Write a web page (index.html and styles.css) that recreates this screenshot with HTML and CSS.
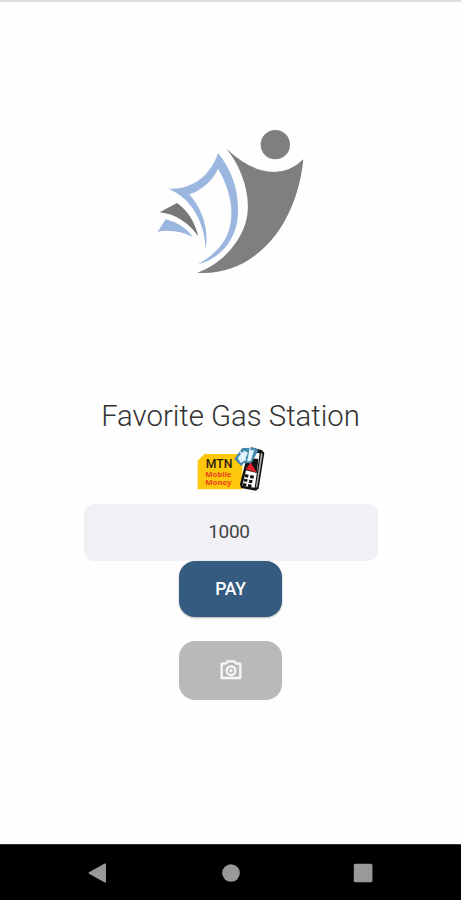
FILE: index.html
```html
<!DOCTYPE html>
<html lang="en">
<head>
<meta charset="utf-8">
<title>Favorite Gas Station</title>
<link rel="stylesheet" href="styles.css">
</head>
<body>
<main class="screen">
  <svg class="logo" viewBox="0 0 510 495" aria-hidden="true">
    <g fill="#7f7f7f">
      <circle cx="391" cy="74" r="44"/>
      <path d="M243 85Q297 137 350 151Q422 170 475 118C466 218 424 326 350 390C294 440 230 463 156 458C220 438 280 378 302 308C323 234 292 144 243 85Z"/>
      <path fill="#777" d="M44 277L96 249Q143 282 160 349Q112 284 44 277Z"/>
    </g>
    <g fill="#9bb7e0">
      <path fill-rule="evenodd" d="M219 99C260 149 282 211 279 282C275 361 226 415 159 433C212 402 245 366 255 318C268 260 249 196 219 146C203 183 169 211 133 223C169 263 193 325 182 386C178 305 139 234 70 206C139 209 195 171 219 99Z"/>
      <path d="M62 298Q111 309 144 351Q91 325 38 335Z"/>
    </g>
  </svg>
  <h1 class="title">Favorite Gas Station</h1>
  <svg class="momo" viewBox="0 0 255 180" role="img" aria-label="MTN Mobile Money">
    <path fill="#fdc70c" d="M43 42H157V148H23V62Z"/>
    <text class="mtn" x="47" y="84" textLength="80" lengthAdjust="spacingAndGlyphs">MTN</text>
    <text class="mobile" x="46" y="111" textLength="78" lengthAdjust="spacingAndGlyphs">Mobile</text>
    <text class="mobile" x="46" y="136" textLength="78" lengthAdjust="spacingAndGlyphs">Money</text>
    <path fill="#111" d="M176 29L184 22 216 31 223 39 206 145 198 152 153 144 150 133Z"/>
    <path fill="#fff" d="M181 36L209 40 194 143 157 137Z"/>
    <path fill="#aaa" d="M213 38L218 43 202 140 197 144Z"/>
    <path fill="#111" d="M176 53L205 57 200 99 167 91Z"/>
    <path fill="#e51f2b" d="M182 67L200 98 168 88Z"/>
    <path fill="#4389ad" d="M133 56L157 24 195 23 205 31 184 70 162 69 153 78Z"/>
    <path fill="#d9f2fa" d="M143 54L162 32 174 38 163 63 152 69ZM178 32L193 29 183 62 171 64Z"/>
    <path fill="none" stroke="#eefaff" stroke-width="4" d="M150 35L167 61M180 25L178 64"/>
    <g fill="#111">
      <path d="M166 102l10 2-2 9-10-2zM181 105l11 2-2 9-10-2zM163 116l10 2-2 8-10-2zM178 119l10 2-2 9-10-2zM160 129l10 2-2 8-10-2zM175 132l10 2-1 8-11-2z"/>
    </g>
  </svg>
  <input class="amount" type="text" value="1000" aria-label="Amount">
  <button class="button pay">PAY</button>
  <button class="button camera" aria-label="Camera">
    <svg class="camera-icon" viewBox="0 0 66 58" fill="none" stroke="#f7f7f7" stroke-width="7">
      <path stroke-linejoin="round" d="M5 11H17L23 4H43L49 11H61V54H5Z"/>
      <circle cx="33" cy="32" r="13"/>
      <circle cx="33" cy="32" r="5" fill="#f7f7f7" stroke="none"/>
    </svg>
  </button>
</main>
<nav class="navbar">
  <svg class="nav-icon" viewBox="0 0 20 20"><path d="M1 9.2 16.7.6Q18 0 18 1.5V18.5Q18 20 16.7 19.4L1 10.8Q0 10 1 9.2Z"/></svg>
  <svg class="nav-icon" viewBox="0 0 20 20"><circle cx="10" cy="10" r="8.8"/></svg>
  <svg class="nav-icon" viewBox="0 0 20 20"><rect x=".8" y=".8" width="18.6" height="18.4" rx="1.5"/></svg>
</nav>
</body>
</html>
```
FILE: styles.css
```css
* {
  box-sizing: border-box;
}

body {
  margin: 0;
  height: 900px;
  display: flex;
  flex-direction: column;
  background: #fefefe;
  font-family: Roboto, "Liberation Sans", sans-serif;
  overflow: hidden;
}

.screen {
  flex: 1;
  display: flex;
  flex-direction: column;
  align-items: center;
  border-top: 2px solid #dedede;
  padding-top: 118px;
}

.logo {
  width: 170px;
  height: 165px;
  margin-right: 2px;
  flex: none;
}

.title {
  margin: 113px 0 0;
  height: 36px;
  line-height: 36px;
  font-size: 29.3px;
  font-weight: 300;
  color: #333;
  white-space: nowrap;
}

.momo {
  width: 85px;
  height: 60px;
  margin: 6px 0 0 4px;
  flex: none;
}

.mtn {
  font: 500 37px Roboto, sans-serif;
  fill: #2b2108;
}

.mobile {
  font: 700 20px "Noto Sans", sans-serif;
  fill: #e8451c;
}

.amount {
  width: 294px;
  height: 57px;
  margin: 4px 0 0;
  padding: 0 3px 2px 0;
  border: 0;
  border-radius: 10px;
  background: #f0f0f5;
  color: #444;
  font: 400 19px Roboto, sans-serif;
  letter-spacing: -0.3px;
  text-align: center;
}

.button {
  width: 103px;
  display: flex;
  align-items: center;
  justify-content: center;
  padding: 0;
  border: 0;
  border-radius: 16px;
}

.pay {
  height: 56px;
  background: #365b80;
  box-shadow: 0 1px 2px rgba(0, 0, 0, 0.3);
  color: #fff;
  font: 500 17.5px Roboto, sans-serif;
  letter-spacing: -0.2px;
}

.camera {
  height: 59px;
  margin-top: 24px;
  padding-bottom: 1px;
  background: #b9b9b9;
}

.camera-icon {
  width: 22px;
  height: 19.3px;
}

.navbar {
  height: 56px;
  display: flex;
  align-items: center;
  justify-content: space-between;
  padding: 0 88px;
  border-top: 1px solid #333;
  background: #000;
}

.nav-icon {
  width: 20px;
  height: 20px;
  fill: #999;
}
```
